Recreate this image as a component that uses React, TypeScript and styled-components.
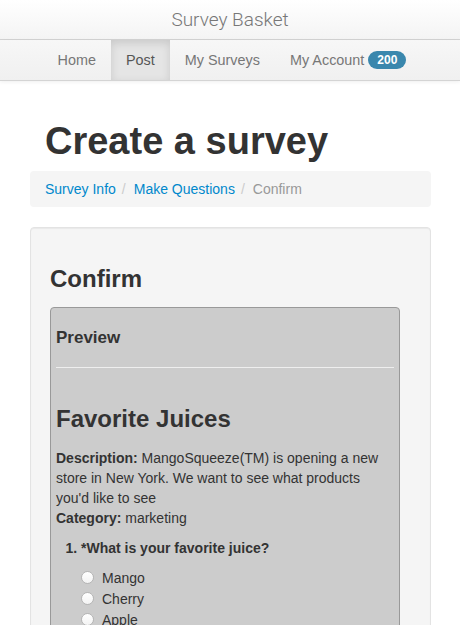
import React from 'react'
import styled, { createGlobalStyle } from 'styled-components'

const GlobalStyle = createGlobalStyle`
  body {
    margin: 0;
    background: #fff;
    font-family: "Liberation Sans", Arial, sans-serif;
    font-size: 14px;
    line-height: 20px;
    color: #333;
  }
`

const TitleBar = styled.div`
  height: 39px;
  display: flex;
  justify-content: center;
  align-items: center;
  background: linear-gradient(#ffffff, #f4f4f4);
  border-bottom: 1px solid #d4d4d4;
  font-family: Roboto, "Liberation Sans", sans-serif;
  font-weight: 300;
  font-size: 19px;
  color: #777;
`

const NavBar = styled.nav`
  height: 40px;
  display: flex;
  justify-content: center;
  padding-left: 4px;
  background: linear-gradient(#f7f7f7, #f0f0f0);
  border-bottom: 1px solid #d4d4d4;
  box-shadow: 0 1px 4px rgba(0, 0, 0, 0.065);
`

const NavItem = styled.a<{ $active?: boolean }>`
  display: flex;
  align-items: center;
  padding: 0 15px;
  font-size: 14.4px;
  text-decoration: none;
  color: ${p => (p.$active ? '#555' : '#777')};
  background: ${p => (p.$active ? '#e5e5e5' : 'transparent')};
  box-shadow: ${p => (p.$active ? 'inset 0 3px 8px rgba(0, 0, 0, 0.125)' : 'none')};
`

const Badge = styled.span`
  margin-left: 4px;
  padding: 0 9px;
  height: 18px;
  line-height: 18px;
  border-radius: 9px;
  background: #3a87ad;
  color: #fff;
  font-size: 12px;
  font-weight: bold;
`

const Container = styled.div`
  padding: 0 29px 40px 30px;
`

const PageTitle = styled.h1`
  margin: 40px 0 8px;
  padding-left: 15px;
  font-size: 38px;
  line-height: 1.1;
  font-weight: bold;
  color: #333;
`

const Breadcrumb = styled.ol`
  display: flex;
  margin: 0 0 20px;
  padding: 8px 15px;
  list-style: none;
  background: #f5f5f5;
  border-radius: 4px;
`

const Crumb = styled.li<{ $active?: boolean }>`
  color: ${p => (p.$active ? '#999' : '#0088cc')};
`

const Divider = styled.li`
  padding: 0 8px 0 6px;
  color: #ccc;
`

const Well = styled.div`
  padding: 19px;
  min-height: 420px;
  background: #f5f5f5;
  border: 1px solid #e3e3e3;
  border-radius: 4px;
  box-shadow: inset 0 1px 1px rgba(0, 0, 0, 0.05);
`

const SectionTitle = styled.h2`
  margin: 19px 0 15px;
  font-size: 24px;
  line-height: 1.1;
  font-weight: bold;
`

const PreviewBox = styled.div`
  width: 338px;
  padding: 0 5px 20px;
  background: #ccc;
  border: 1px solid #999;
  border-radius: 4px;
`

const PreviewLabel = styled.h4`
  margin: 21px 0 19px;
  font-size: 17px;
  line-height: 1.1;
  font-weight: bold;
`

const Rule = styled.hr`
  margin: 0;
  border: 0;
  border-top: 1px solid #eee;
`

const SurveyTitle = styled.h2`
  margin: 38px 0 16px;
  font-size: 24px;
  line-height: 1.1;
  font-weight: bold;
`

const Para = styled.p`
  margin: 0;
`

const Questions = styled.ol`
  margin: 10px 0 0;
  padding-left: 25px;
`

const Question = styled.li`
  font-weight: bold;
`

const Options = styled.ul`
  margin: 9px 0 0;
  padding: 0;
  list-style: none;
  font-weight: normal;
`

const Option = styled.li`
  display: flex;
  align-items: center;
  gap: 8px;
  height: 21px;
`

const Radio = styled.span`
  width: 11px;
  height: 11px;
  border-radius: 50%;
  border: 1px solid #b5b5b5;
  background: linear-gradient(#ffffff, #f3f3f3);
`

const crumbs = ['Survey Info', 'Make Questions']
const options = ['Mango', 'Cherry', 'Apple', 'Orange']

export default function App() {
  return (
    <>
      <GlobalStyle />
      <TitleBar>Survey Basket</TitleBar>
      <NavBar>
        <NavItem href="#">Home</NavItem>
        <NavItem href="#" $active>Post</NavItem>
        <NavItem href="#">My Surveys</NavItem>
        <NavItem href="#">
          My Account <Badge>200</Badge>
        </NavItem>
      </NavBar>
      <Container>
        <PageTitle>Create a survey</PageTitle>
        <Breadcrumb>
          {crumbs.map(c => (
            <React.Fragment key={c}>
              <Crumb>{c}</Crumb>
              <Divider>/</Divider>
            </React.Fragment>
          ))}
          <Crumb $active>Confirm</Crumb>
        </Breadcrumb>
        <Well>
          <SectionTitle>Confirm</SectionTitle>
          <PreviewBox>
            <PreviewLabel>Preview</PreviewLabel>
            <Rule />
            <SurveyTitle>Favorite Juices</SurveyTitle>
            <Para>
              <b>Description:</b> MangoSqueeze(TM) is opening a new store in New York. We want to
              see what products you'd like to see
            </Para>
            <Para>
              <b>Category:</b> marketing
            </Para>
            <Questions>
              <Question>
                *What is your favorite juice?
                <Options>
                  {options.map(o => (
                    <Option key={o}>
                      <Radio />
                      {o}
                    </Option>
                  ))}
                </Options>
              </Question>
            </Questions>
          </PreviewBox>
        </Well>
      </Container>
    </>
  )
}
